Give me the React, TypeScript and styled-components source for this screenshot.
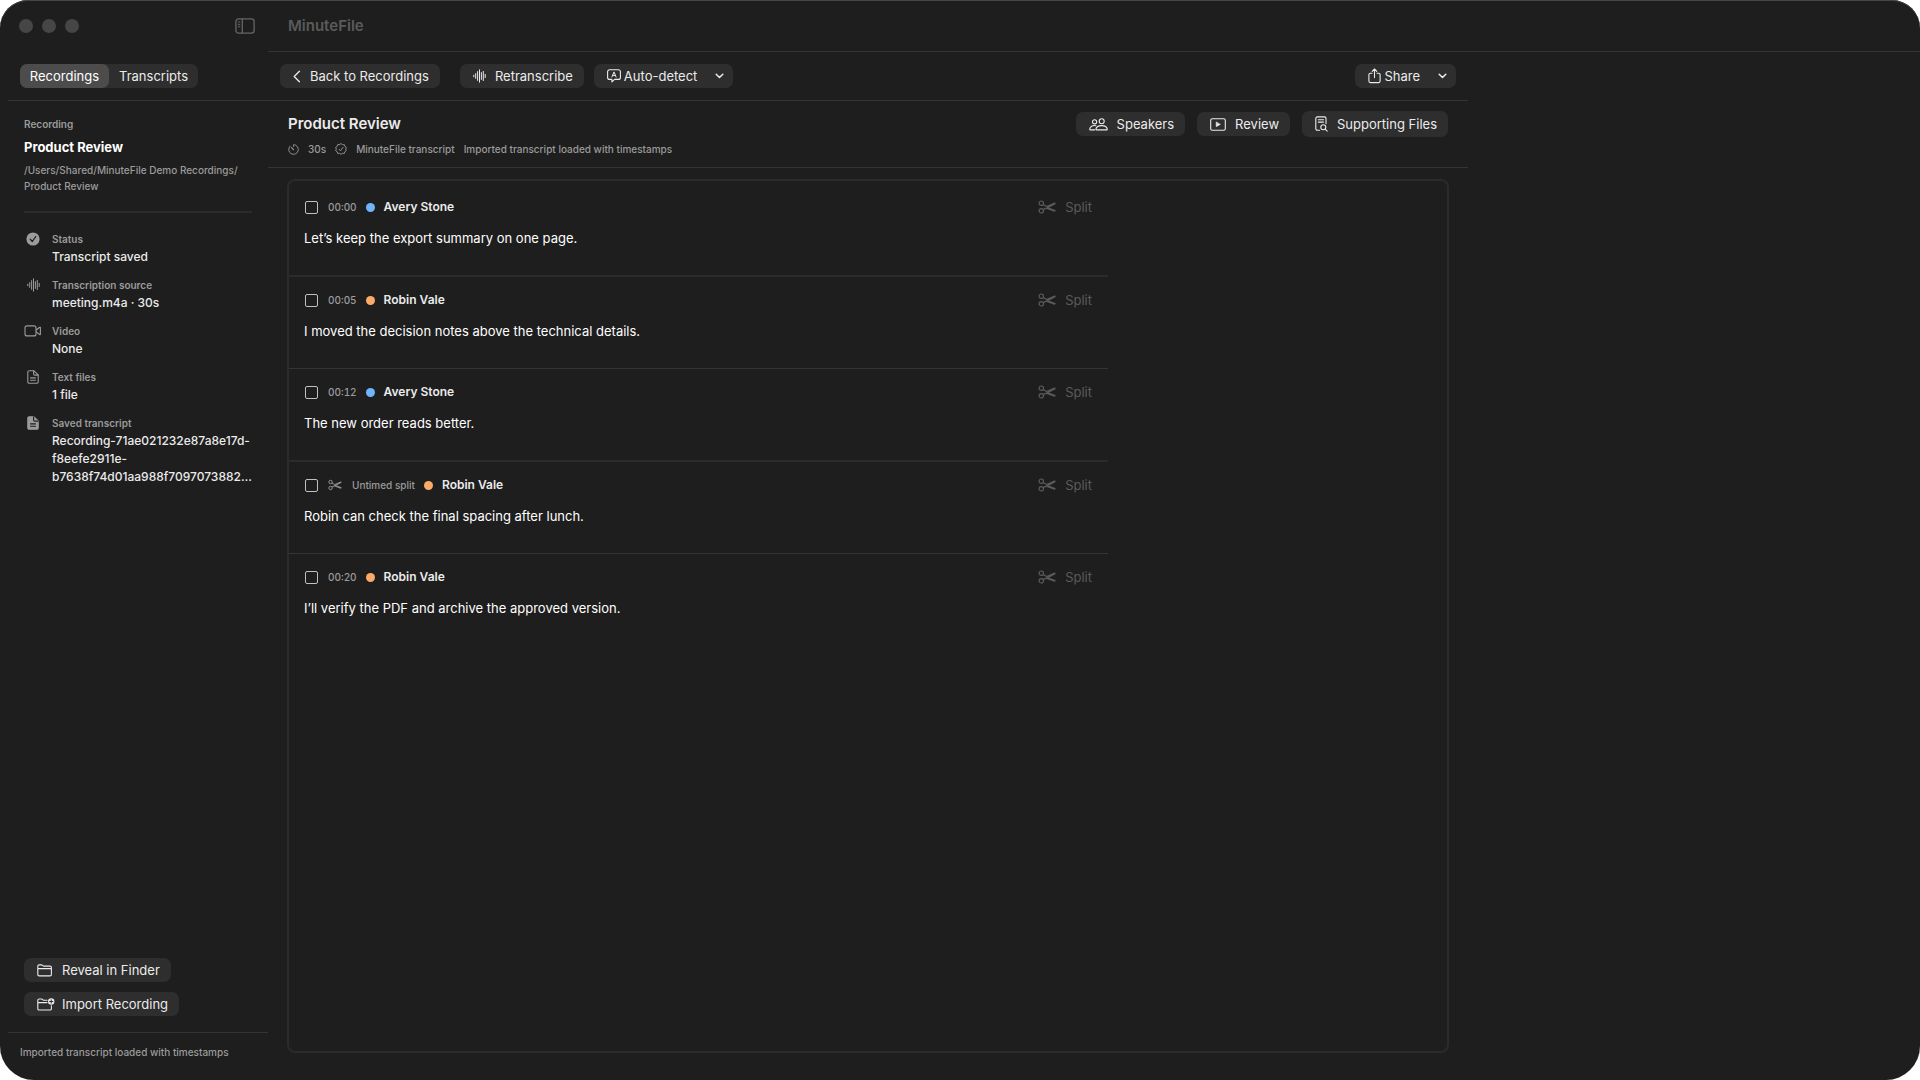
import React from "react";
import styled, { createGlobalStyle, css } from "styled-components";

const color = {
  window: "#1e1e1e",
  line: "#343434",
  frame: "#2b2b2b",
  control: "#2e2e2e",
  controlOn: "#4c4c4c",
  text: "#ebebeb",
  strong: "#ffffff",
  muted: "#9b9b9b",
  faint: "#5a5a5a",
  toggle: "#666666",
  light: "#464646",
};

const GlobalStyle = createGlobalStyle`
  *, *::before, *::after { box-sizing: border-box; }
  html, body { margin: 0; background: #ffffff; }
  body, button, select, input {
    font-family: Inter, "Liberation Sans", sans-serif;
    font-size: 13px;
    line-height: 18px;
    font-weight: 400;
  }
  h1, h2, p, ul, ol, dl, dd { margin: 0; padding: 0; }
`;

const small = css`
  font-size: 10px;
  line-height: 16px;
  font-weight: 500;
  color: ${color.muted};
`;

const Window = styled.div`
  display: grid;
  grid-template-columns: 268px minmax(0, 1fr);
  min-height: 100vh;
  background: ${color.window};
  color: ${color.text};
  border-radius: 28px 28px 34px 34px;
  box-shadow: inset 0 1px 0 #454545;
  overflow: hidden;
`;

const Sidebar = styled.aside`
  display: flex;
  flex-direction: column;
  padding-left: 8px;
`;

const SidebarTop = styled.div`
  display: flex;
  align-items: center;
  justify-content: space-between;
  height: 52px;
  padding: 0 13px 0 11px;
`;

const Lights = styled.div`
  display: flex;
  gap: 9px;
`;

const Light = styled.button`
  width: 14px;
  height: 14px;
  padding: 0;
  border: 0;
  border-radius: 50%;
  background: ${color.light};
`;

const ToggleButton = styled.button`
  display: flex;
  padding: 0;
  border: 0;
  background: none;
  color: ${color.toggle};
`;

const bar = css`
  display: flex;
  align-items: center;
  height: 49px;
  padding: 0 12px;
  border-bottom: 1px solid ${color.line};
`;

const TabBar = styled.div`
  ${bar}
`;

const Tabs = styled.div`
  display: flex;
  border-radius: 7px;
  background: ${color.control};
`;

const Tab = styled.button<{ $on?: boolean }>`
  width: 89px;
  height: 24px;
  padding: 0;
  border: 0;
  border-radius: 7px;
  background: ${(p) => (p.$on ? color.controlOn : "transparent")};
  color: ${(p) => (p.$on ? color.strong : color.text)};
`;

const Details = styled.div`
  flex: 1;
  padding: 15px 16px 0;
`;

const Caption = styled.p`
  ${small}
  font-weight: 600;
`;

const RecordingName = styled.h2`
  margin-top: 5px;
  font-size: 13px;
  line-height: 20px;
  font-weight: 700;
  color: ${color.strong};
`;

const Path = styled.p`
  ${small}
  margin-top: 5px;
  padding-bottom: 17px;
  border-bottom: 2px solid ${color.frame};
`;

const Facts = styled.dl`
  display: grid;
  gap: 10px;
  margin-top: 17px;
`;

const Fact = styled.div`
  display: grid;
  grid-template-columns: 18px minmax(0, 1fr);
  column-gap: 10px;
`;

const FactIcon = styled.dt`
  display: flex;
  align-items: center;
  justify-content: center;
  height: 18px;
  color: ${color.muted};
`;

const FactLabel = styled.dt`
  ${small}
  line-height: 18px;
  font-weight: 600;
`;

const FactValue = styled.dd`
  grid-column: 2;
  font-size: 12px;
  font-weight: 500;
`;

const SidebarActions = styled.div`
  display: flex;
  flex-direction: column;
  align-items: flex-start;
  gap: 10px;
  padding: 0 16px 16px;
`;

const Status = styled.footer`
  ${small}
  height: 48px;
  padding: 11px 12px;
  border-top: 1px solid ${color.line};
`;

const control = css`
  display: flex;
  align-items: center;
  height: 24px;
  padding: 0 11px 0 13px;
  border: 0;
  border-radius: 7px;
  background: ${color.control};
  color: ${color.text};
  white-space: nowrap;
`;

const Button = styled.button<{ $gap?: number; $tall?: boolean }>`
  ${control}
  gap: ${(p) => p.$gap ?? 9}px;
  height: ${(p) => (p.$tall ? 26 : 24)}px;
`;

const Language = styled.label`
  ${control}
  gap: 3px;
  padding-right: 9px;
`;

const LanguageSelect = styled.select`
  appearance: none;
  width: 88px;
  padding: 0;
  border: 0;
  background: none;
  color: inherit;
`;

const MenuArrow = styled.span`
  display: flex;
  margin-left: 15px;
  margin-right: -2px;
`;

const Main = styled.main`
  display: flex;
  flex-direction: column;
`;

const TitleBar = styled.header`
  display: flex;
  align-items: center;
  height: 52px;
  padding: 0 20px;
  border-bottom: 1px solid ${color.line};
  font-size: 15px;
  font-weight: 600;
  color: ${color.faint};
`;

const Content = styled.div`
  display: flex;
  flex: 1;
  flex-direction: column;
  max-width: 1200px;
`;

const Toolbar = styled.div`
  ${bar}
`;

const ToolGroup = styled.div<{ $gap: number }>`
  display: flex;
  align-items: center;
  gap: ${(p) => p.$gap}px;
`;

const Push = styled.div`
  margin-left: auto;
`;

const Heading = styled.section`
  display: flex;
  align-items: flex-start;
  justify-content: space-between;
  height: 67px;
  padding: 10px 20px 0;
  border-bottom: 1px solid ${color.line};
`;

const Title = styled.h1`
  margin-top: 3px;
  font-size: 15px;
  line-height: 20px;
  font-weight: 600;
  color: ${color.text};
`;

const Meta = styled.div`
  ${small}
  display: flex;
  align-items: center;
  gap: 9px;
  margin-top: 7px;
`;

const Frame = styled.section`
  flex: 1;
  margin: 11px 19px 27px;
  border: 2px solid ${color.frame};
  border-radius: 8px;
`;

const Segments = styled.ol`
  max-width: 819px;
  padding-top: 3px;
  list-style: none;
`;

const Segment = styled.li`
  padding: 13px 16px 27px 15px;
  border-bottom: 2px solid ${color.frame};

  &:nth-child(even) {
    border-bottom: 1px solid ${color.line};
  }

  &:last-child {
    border-bottom: 0;
  }
`;

const SegmentHead = styled.div`
  display: flex;
  align-items: center;
  gap: 9px;
  height: 20px;
  padding-left: 1px;
`;

const Pick = styled.input`
  appearance: none;
  width: 13px;
  height: 13px;
  margin: 0 1px 0 0;
  border: 1px solid #c0c0c0;
  border-radius: 2px;
`;

const Time = styled.span`
  ${small}
  display: flex;
  align-items: center;
  gap: 10px;
  font-variant-numeric: tabular-nums;
`;

const Dot = styled.span<{ $tint: string }>`
  width: 9px;
  height: 9px;
  border-radius: 50%;
  background: ${(p) => p.$tint};
`;

const Speaker = styled.label`
  font-size: 12px;
  font-weight: 600;
`;

const SplitButton = styled.button`
  display: flex;
  align-items: center;
  gap: 9px;
  margin-left: auto;
  padding: 0;
  border: 0;
  background: none;
  color: ${color.faint};
`;

const Line = styled.p`
  margin-top: 11px;
  line-height: 20px;
  color: ${color.strong};
`;

type IconProps = { w: number; h: number; children: React.ReactNode; sw?: number };
const Icon = ({ w, h, children, sw = 1.1 }: IconProps) => (
  <svg
    width={w}
    height={h}
    viewBox={`0 0 ${w} ${h}`}
    fill="none"
    stroke="currentColor"
    strokeWidth={sw}
    strokeLinecap="round"
    strokeLinejoin="round"
    aria-hidden="true"
  >
    {children}
  </svg>
);

const PanelIcon = () => (
  <Icon w={20} h={16} sw={1.3}>
    <rect x="0.9" y="0.9" width="18.2" height="14.2" rx="2.6" />
    <path d="M7.3 1v14" />
    <path d="M3.2 4h1.7M3.2 6.4h1.7M3.2 8.8h1.7" strokeWidth="1" />
  </Icon>
);
const ChevronLeft = () => (
  <Icon w={8} h={13} sw={1.3}>
    <path d="M6.4 1.2 1.2 6.5 6.4 11.8" />
  </Icon>
);
const ChevronDown = () => (
  <Icon w={9} h={6} sw={1.5}>
    <path d="M1.2 1.2 4.5 4.5 7.8 1.2" />
  </Icon>
);
const Wave = () => (
  <Icon w={13} h={14} sw={1}>
    <path d="M.8 6.2v1.6M2.7 4.6v4.8M4.6 2.6v8.8M6.5.8v12.4M8.4 3.6v6.8M10.3 2.4v9.2M12.2 5.4v3.2" />
  </Icon>
);
const Bubble = () => (
  <Icon w={14} h={14}>
    <path d="M2.6.8h8.8a2 2 0 0 1 2 2v5.6a2 2 0 0 1-2 2H7.6L4.9 12.9V10.4H2.6a2 2 0 0 1-2-2V2.8a2 2 0 0 1 2-2Z" />
    <path d="M4.9 8 7 2.9 9.1 8M5.6 6.4h2.8" strokeWidth="1" />
  </Icon>
);
const ShareIcon = () => (
  <Icon w={13} h={16}>
    <path d="M4 5.2H2.4A1.5 1.5 0 0 0 .9 6.7v6.4A1.5 1.5 0 0 0 2.4 14.6h8.2a1.5 1.5 0 0 0 1.5-1.5V6.7A1.5 1.5 0 0 0 10.6 5.2H9" />
    <path d="M6.5 9.6V1.2M4.2 3.3 6.5 1l2.3 2.3" />
  </Icon>
);
const People = () => (
  <Icon w={19} h={13}>
    <circle cx="5.6" cy="3.8" r="2.1" />
    <circle cx="12.7" cy="3.3" r="2.5" />
    <path d="M6.9 7.7C3.5 6.9.9 8.6.7 11.2q0 .7.7.7h4.2" />
    <path d="M7.5 11.9q-.7 0-.6-.7c.4-2.3 2.8-3.6 5.8-3.6s5.2 1.3 5.6 3.6q0 .7-.7.7Z" />
  </Icon>
);
const PlayBox = () => (
  <Icon w={16} h={13}>
    <rect x="0.7" y="0.7" width="14.6" height="11.6" rx="1.6" />
    <path d="M6.2 4.3v4.4l3.9-2.2Z" fill="currentColor" strokeWidth="0.6" />
  </Icon>
);
const DocSearch = () => (
  <Icon w={13} h={16}>
    <path d="M4.6 14.2H2.3A1.5 1.5 0 0 1 .8 12.7V2.4A1.5 1.5 0 0 1 2.3.9h7.2A1.5 1.5 0 0 1 11 2.4v5.2" />
    <path d="M3.3 3.8h5.2M3.3 6.1h5.2" />
    <circle cx="8.3" cy="11.3" r="2.5" />
    <path d="m10.2 13.2 2 2" />
  </Icon>
);
const Timer = () => (
  <Icon w={11} h={11} sw={0.9}>
    <path d="M5.5 2.3V.7A4.8 4.8 0 1 1 2 2.2" />
    <path d="m3.6 3.7 1.9 1.9" strokeWidth="1.2" />
  </Icon>
);
const Seal = () => (
  <Icon w={12} h={12} sw={0.9}>
    <path d="M6 .6 7.5 1.7 9.3 1.6 9.8 3.3 11.3 4.3 10.7 6 11.3 7.7 9.8 8.7 9.3 10.4 7.5 10.3 6 11.4 4.5 10.3 2.7 10.4 2.2 8.7.7 7.7 1.3 6 .7 4.3 2.2 3.3 2.7 1.6 4.5 1.7Z" />
    <path d="m4.1 6.2 1.4 1.6L8 4.3" />
  </Icon>
);
const CheckCircle = () => (
  <Icon w={14} h={14} sw={1.3}>
    <circle cx="7" cy="7" r="6.6" fill="currentColor" stroke="none" />
    <path d="m4.3 7.3 2 2.2 3.5-5" stroke={color.window} />
  </Icon>
);
const Video = () => (
  <Icon w={18} h={12}>
    <rect x="1" y="0.9" width="11" height="10" rx="2" />
    <path d="m12.2 5 3.5-2.7q.7-.4.7.3v6.6q0 .7-.7.3L12.2 6.9" />
  </Icon>
);
const Doc = ({ filled = false }: { filled?: boolean }) => (
  <Icon w={12} h={14}>
    <path
      d="M2.2.7h4.5L11.2 5v6.9a1.4 1.4 0 0 1-1.4 1.4H2.2A1.4 1.4 0 0 1 .8 11.9V2.1A1.4 1.4 0 0 1 2.2.7Z"
      fill={filled ? "currentColor" : "none"}
    />
    <path d="M6.6.9v3q0 1.2 1.2 1.2H11" stroke={filled ? color.window : "currentColor"} />
    <path d="M3.5 7.9h5M3.5 10.3h5" stroke={filled ? color.window : "currentColor"} />
  </Icon>
);
const Folder = () => (
  <Icon w={16} h={13}>
    <path d="M.8 2.2Q.8.9 2.1.9h2.4q.6 0 1 .4l.4.4q.4.4 1 .4h6.2q1.3 0 1.3 1.3v7.2q0 1.3-1.3 1.3H2.1Q.8 11.9.8 10.6ZM.8 4.6h13.6" />
  </Icon>
);
const FolderPlus = () => (
  <Icon w={18} h={13}>
    <path d="M14.4 7.8v2.9q0 1.3-1.3 1.3h-11Q.8 12 .8 10.7V2.3Q.8 1 2.1 1h2.4q.6 0 1 .4l.4.4q.4.4 1 .4h3.2M.8 4.6h9.2" />
    <circle cx="14.2" cy="3.5" r="3.2" fill="currentColor" stroke="none" />
    <path d="M14.2 1.9v3.2M12.6 3.5h3.2" stroke={color.control} strokeWidth="1" />
  </Icon>
);
const Scissors = ({ w = 18, h = 14 }: { w?: number; h?: number }) => (
  <svg width={w} height={h} viewBox="0 0 18 14" fill="none" stroke="currentColor" strokeWidth="1.2" aria-hidden="true">
    <circle cx="3.3" cy="3.2" r="2.2" />
    <circle cx="3.3" cy="10.8" r="2.2" />
    <path
      d="M5.2 4.4 8.6 6.5 16.6 3l.5.6L9.4 7.6 5.2 9.6M9.4 7.6l7.7 2.9-.5.7L8.2 8.1"
      strokeLinejoin="round"
    />
  </svg>
);

const BLUE = "#70b4fb";
const ORANGE = "#fbaa68";

const segments = [
  { time: "00:00", name: "Avery Stone", tint: BLUE, text: "Let’s keep the export summary on one page." },
  { time: "00:05", name: "Robin Vale", tint: ORANGE, text: "I moved the decision notes above the technical details." },
  { time: "00:12", name: "Avery Stone", tint: BLUE, text: "The new order reads better." },
  { time: null, name: "Robin Vale", tint: ORANGE, text: "Robin can check the final spacing after lunch." },
  { time: "00:20", name: "Robin Vale", tint: ORANGE, text: "I’ll verify the PDF and archive the approved version." },
];

const facts = [
  { icon: <CheckCircle />, label: "Status", value: "Transcript saved" },
  { icon: <Wave />, label: "Transcription source", value: "meeting.m4a · 30s" },
  { icon: <Video />, label: "Video", value: "None" },
  { icon: <Doc />, label: "Text files", value: "1 file" },
  {
    icon: <Doc filled />,
    label: "Saved transcript",
    value: (
      <>
        Recording-71ae021232e87a8e17d-
        <br />
        f8eefe2911e-
        <br />
        b7638f74d01aa988f7097073882…
      </>
    ),
  },
];

export default function App() {
  return (
    <>
      <GlobalStyle />
      <Window>
        <Sidebar>
          <SidebarTop>
            <Lights>
              <Light aria-label="Close" />
              <Light aria-label="Minimize" />
              <Light aria-label="Zoom" />
            </Lights>
            <ToggleButton aria-label="Toggle sidebar">
              <PanelIcon />
            </ToggleButton>
          </SidebarTop>
          <TabBar>
            <Tabs role="tablist">
              <Tab role="tab" aria-selected="true" $on>
                Recordings
              </Tab>
              <Tab role="tab" aria-selected="false">
                Transcripts
              </Tab>
            </Tabs>
          </TabBar>
          <Details>
            <Caption>Recording</Caption>
            <RecordingName>Product Review</RecordingName>
            <Path>
              /Users/Shared/MinuteFile Demo Recordings/
              <br />
              Product Review
            </Path>
            <Facts>
              {facts.map((f) => (
                <Fact key={f.label}>
                  <FactIcon aria-hidden="true">{f.icon}</FactIcon>
                  <FactLabel>{f.label}</FactLabel>
                  <FactValue>{f.value}</FactValue>
                </Fact>
              ))}
            </Facts>
          </Details>
          <SidebarActions>
            <Button>
              <Folder />
              Reveal in Finder
            </Button>
            <Button $gap={7}>
              <FolderPlus />
              Import Recording
            </Button>
          </SidebarActions>
          <Status>Imported transcript loaded with timestamps</Status>
        </Sidebar>

        <Main>
          <TitleBar>MinuteFile</TitleBar>
          <Content>
            <Toolbar>
              <ToolGroup $gap={20}>
                <Button>
                  <ChevronLeft />
                  Back to Recordings
                </Button>
                <ToolGroup $gap={10}>
                  <Button>
                    <Wave />
                    Retranscribe
                  </Button>
                  <Language>
                    <Bubble />
                    <LanguageSelect aria-label="Language" defaultValue="auto">
                      <option value="auto">Auto-detect</option>
                    </LanguageSelect>
                    <ChevronDown />
                  </Language>
                </ToolGroup>
              </ToolGroup>
              <Push>
                <Button $gap={3} aria-haspopup="menu">
                  <ShareIcon />
                  Share
                  <MenuArrow>
                    <ChevronDown />
                  </MenuArrow>
                </Button>
              </Push>
            </Toolbar>
            <Heading>
              <div>
                <Title>Product Review</Title>
                <Meta>
                  <Timer />
                  <span>30s</span>
                  <Seal />
                  <span>MinuteFile transcript</span>
                  <span>Imported transcript loaded with timestamps</span>
                </Meta>
              </div>
              <ToolGroup $gap={12}>
                <Button>
                  <People />
                  Speakers
                </Button>
                <Button>
                  <PlayBox />
                  Review
                </Button>
                <Button $tall>
                  <DocSearch />
                  Supporting Files
                </Button>
              </ToolGroup>
            </Heading>
            <Frame>
              <Segments>
                {segments.map((s, i) => (
                  <Segment key={i}>
                    <SegmentHead>
                      <Pick type="checkbox" id={`segment-${i}`} />
                      <Time>
                        {s.time ?? (
                          <>
                            <Scissors w={14} h={12} />
                            Untimed split
                          </>
                        )}
                      </Time>
                      <Dot $tint={s.tint} />
                      <Speaker htmlFor={`segment-${i}`}>{s.name}</Speaker>
                      <SplitButton disabled>
                        <Scissors />
                        Split
                      </SplitButton>
                    </SegmentHead>
                    <Line>{s.text}</Line>
                  </Segment>
                ))}
              </Segments>
            </Frame>
          </Content>
        </Main>
      </Window>
    </>
  );
}
